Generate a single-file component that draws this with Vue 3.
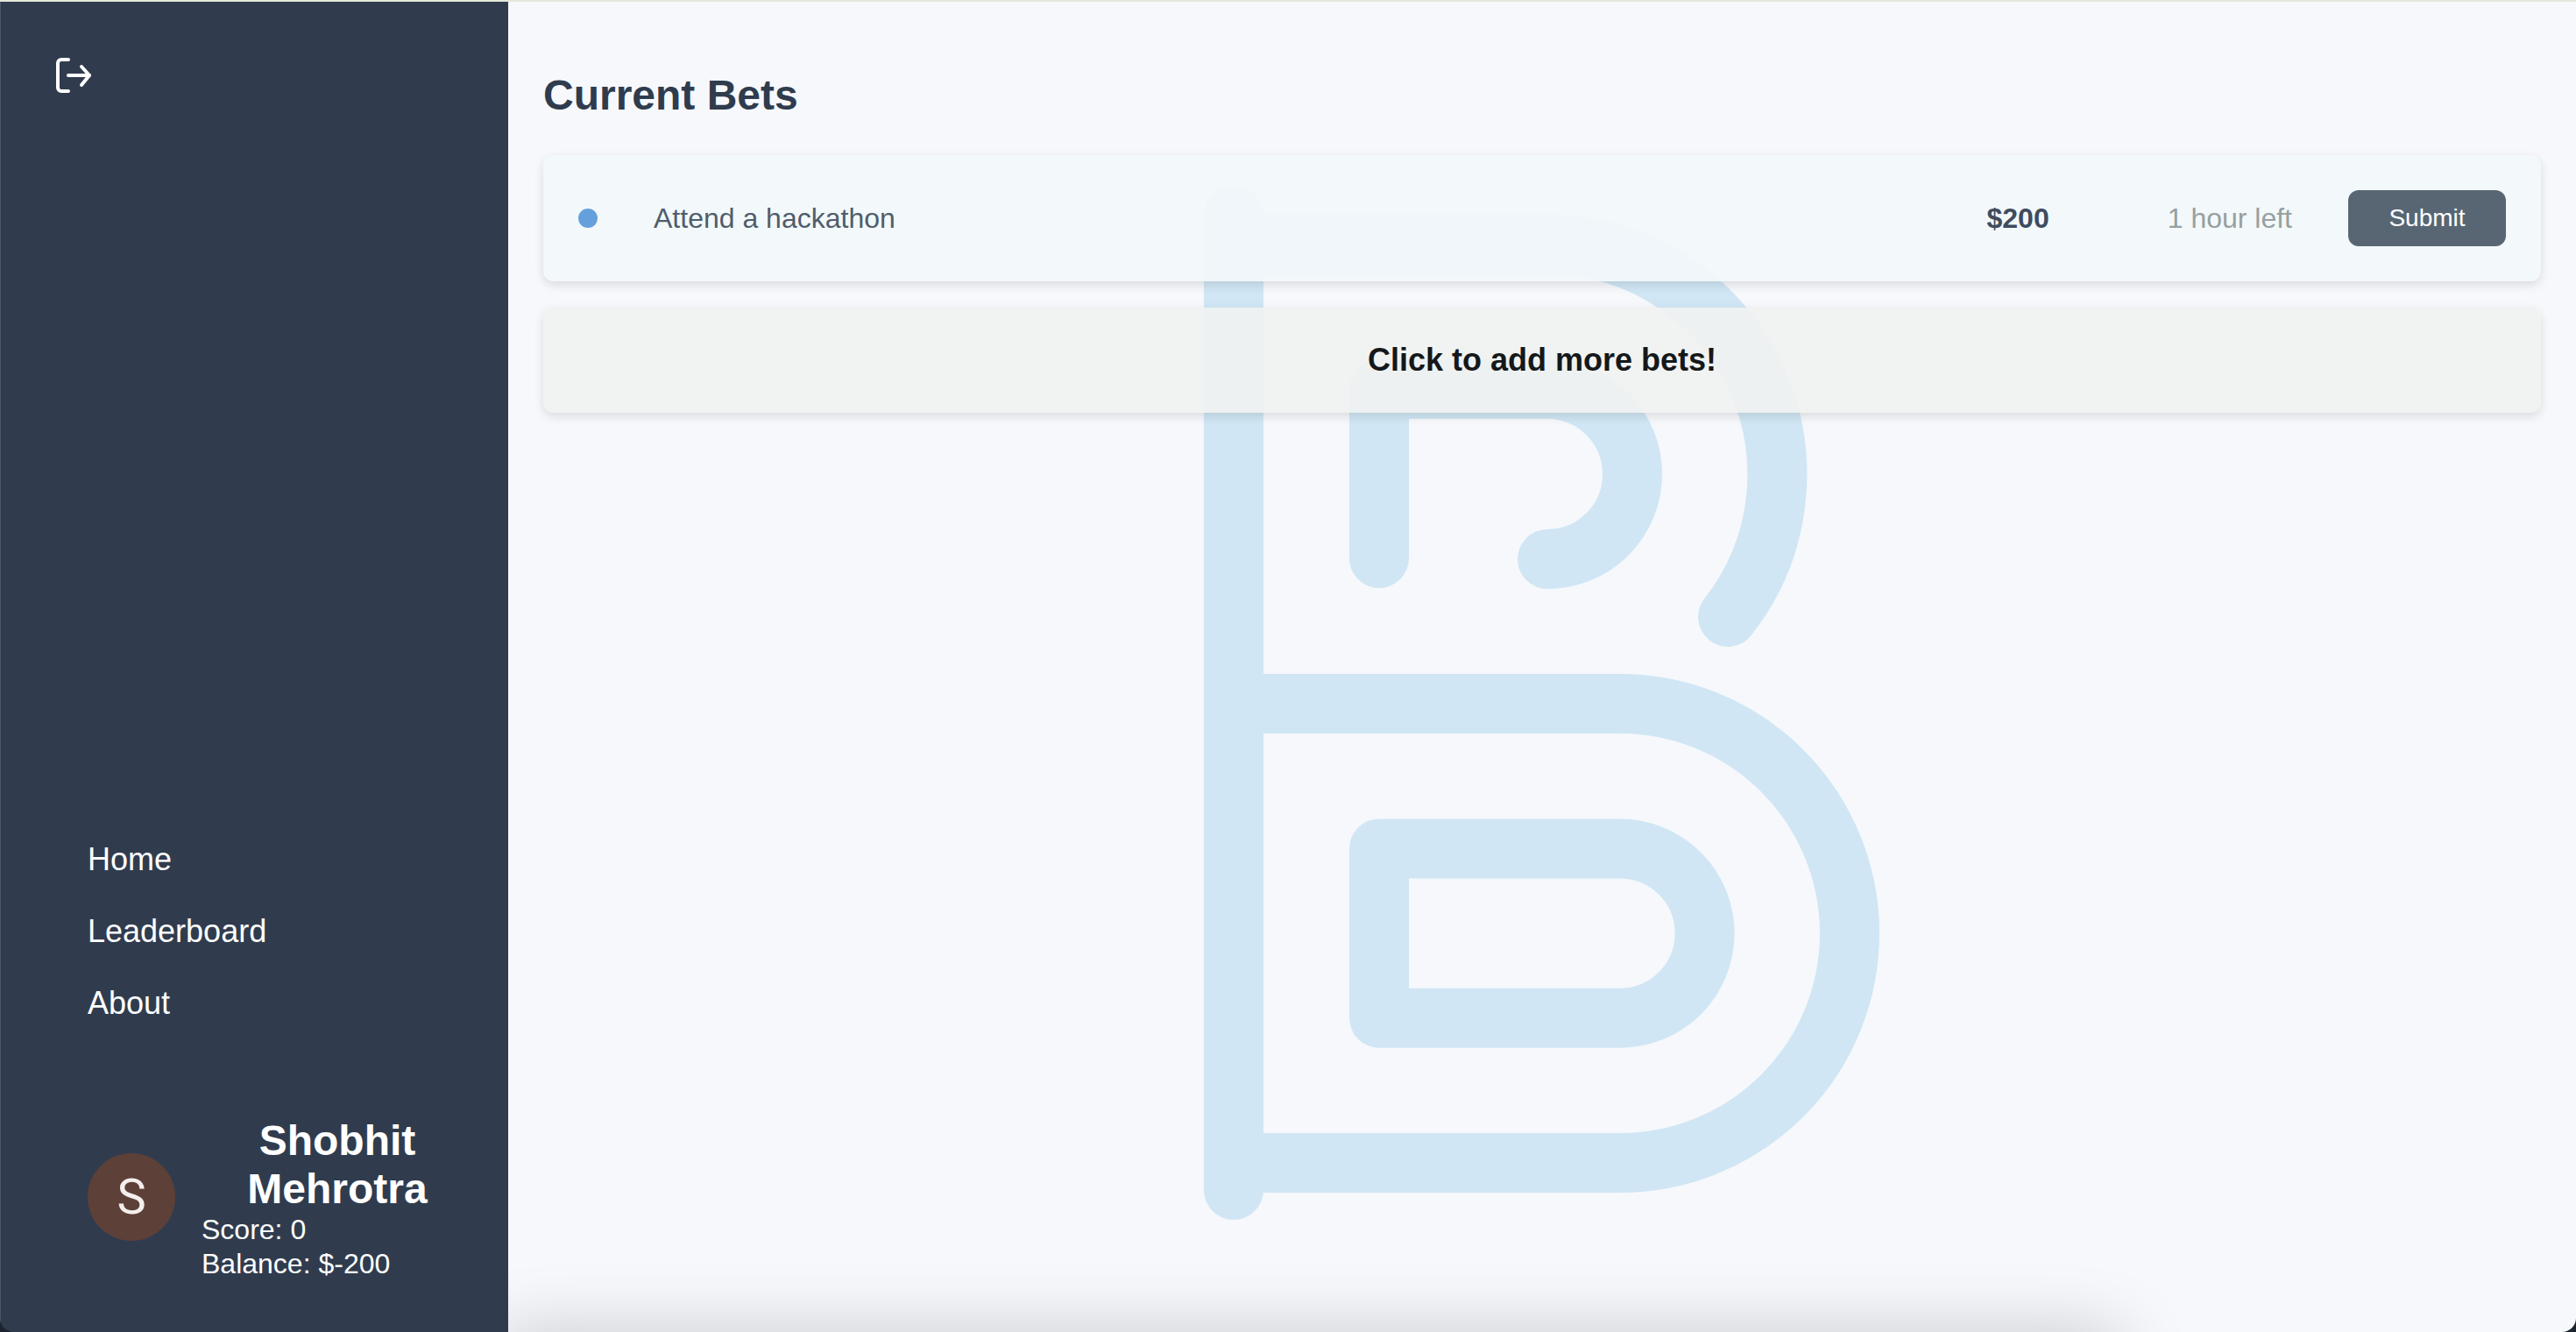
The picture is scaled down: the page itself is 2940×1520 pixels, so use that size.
<template>
  <div class="frame">
    <div class="app">
      <aside class="sidebar">
        <button class="logout" aria-label="Log out">
          <svg viewBox="0 0 48 48" width="48" height="48" fill="none" stroke="#fff" stroke-width="4" stroke-linecap="round" stroke-linejoin="round">
            <path d="M18 6H10a4 4 0 0 0-4 4v28a4 4 0 0 0 4 4h8" />
            <path d="M18 24H42" />
            <path d="M33 14l9 10-9 11" />
          </svg>
        </button>

        <nav class="nav">
          <a v-for="link in links" :key="link" class="nav-link">{{ link }}</a>
        </nav>

        <div class="user">
          <div class="avatar">S</div>
          <div class="user-info">
            <h3 class="user-name">{{ user.name }}</h3>
            <p>Score: {{ user.score }}</p>
            <p>Balance: ${{ user.balance }}</p>
          </div>
        </div>
      </aside>

      <main class="main">
        <!-- logo behind the cards -->
        <svg class="watermark" viewBox="1374 212 772 1182" width="772" height="1182" fill="none" stroke="#d0e6f4" stroke-width="68" stroke-linecap="round" stroke-linejoin="round">
          <path d="M1408 246V1358" />
          <path d="M1408 803H1849A262 262 0 0 1 1849 1327H1408" />
          <path d="M1574 968.5H1849A96.6 96.6 0 0 1 1849 1161.7H1574Z" />
          <path d="M1408 279H1766A262.5 262.5 0 0 1 1972 704" />
          <path d="M1574 637V444H1766A97 97 0 0 1 1766 638" />
        </svg>

        <h2 class="title">Current Bets</h2>

        <div v-for="bet in bets" :key="bet.name" class="card bet">
          <span class="dot"></span>
          <span class="bet-name">{{ bet.name }}</span>
          <span class="bet-amount">{{ bet.amount }}</span>
          <span class="bet-time">{{ bet.time }}</span>
          <button class="submit">Submit</button>
        </div>

        <div class="card add-more">Click to add more bets!</div>

        <div class="bottom-shadow"></div>
      </main>
    </div>
  </div>
</template>

<script setup>
import { ref } from "vue";

const links = ["Home", "Leaderboard", "About"];

const user = ref({
  name: "Shobhit Mehrotra",
  score: 0,
  balance: -200,
});

const bets = ref([
  { name: "Attend a hackathon", amount: "$200", time: "1 hour left" },
]);
</script>

<style>
html,
body {
  margin: 0;
  background: #1c2430;
}
</style>

<style scoped>
.frame {
  width: 2940px;
  height: 1520px;
  box-sizing: border-box;
  padding-top: 2px;
  background: linear-gradient(#e4e8d9 2px, #1c2430 2px);
  font-family: "Liberation Sans", Arial, sans-serif;
}

.app {
  display: flex;
  height: 1518px;
  border-radius: 0 0 16px 16px;
  overflow: hidden;
}

.sidebar {
  display: flex;
  flex-direction: column;
  flex: 0 0 580px;
  box-sizing: border-box;
  padding: 60px 40px 58px 99px;
  background: #303c4e;
  border-left: 1px solid #4b5767;
  color: #fff;
}

.logout {
  align-self: flex-start;
  width: 48px;
  height: 48px;
  margin-left: -40px;
  padding: 0;
  border: none;
  background: none;
}

.nav {
  display: flex;
  flex-direction: column;
  margin-top: auto;
  margin-bottom: 88px;
}

.nav-link {
  font-size: 36px;
  line-height: 82px;
}

.user {
  display: flex;
  align-items: center;
  gap: 30px;
}

.avatar {
  display: flex;
  align-items: center;
  justify-content: center;
  flex: 0 0 100px;
  height: 100px;
  margin-bottom: 5px;
  border-radius: 50%;
  background: #5d4037;
  font-family: Roboto, sans-serif;
  font-size: 56px;
  color: #f4efec;
}

.user-info {
  flex: 1;
  font-size: 32px;
  line-height: 39px;
}

.user-info p {
  margin: 0;
}

.user-name {
  margin: 0;
  font-size: 48px;
  line-height: 55px;
  font-weight: 700;
  text-align: center;
}

.main {
  position: relative;
  flex: 1;
  box-sizing: border-box;
  padding: 79px 40px 0;
  background: #f6f8fb;
  overflow: hidden;
}

.watermark {
  position: absolute;
  left: 50%;
  top: 210px;
  transform: translateX(-50%);
}

.title {
  position: relative;
  margin: 0 0 41px;
  font-size: 48px;
  line-height: 55px;
  font-weight: 700;
  color: #2f3c4e;
}

.card {
  position: relative;
  box-sizing: border-box;
  border-radius: 12px;
  box-shadow: 0 4px 12px rgba(0, 0, 0, 0.12);
}

.bet {
  display: flex;
  align-items: center;
  height: 144px;
  margin-bottom: 30px;
  padding: 0 40px;
  background: rgba(243, 247, 250, 0.9);
  font-size: 32px;
}

.dot {
  flex: 0 0 22px;
  height: 22px;
  border-radius: 50%;
  background: #64a1dc;
}

.bet-name {
  flex: 1;
  margin-left: 64px;
  color: #4f5d6d;
}

.bet-amount {
  margin-right: 135px;
  font-weight: 700;
  color: #3f4c5e;
}

.bet-time {
  margin-right: 64px;
  color: #95a0a2;
}

.submit {
  width: 180px;
  height: 64px;
  padding: 0;
  border: none;
  border-radius: 12px;
  background: #586674;
  font-family: inherit;
  font-size: 28px;
  color: #fff;
}

.add-more {
  display: flex;
  align-items: center;
  justify-content: center;
  height: 120px;
  background: rgba(241, 242, 241, 0.9);
  font-size: 36px;
  font-weight: 700;
  color: #15181a;
}

.bottom-shadow {
  position: absolute;
  left: -10px;
  top: 100%;
  width: 1850px;
  height: 60px;
  margin-top: 4px;
  box-shadow: 0 0 80px rgba(0, 0, 0, 0.22);
}
</style>
